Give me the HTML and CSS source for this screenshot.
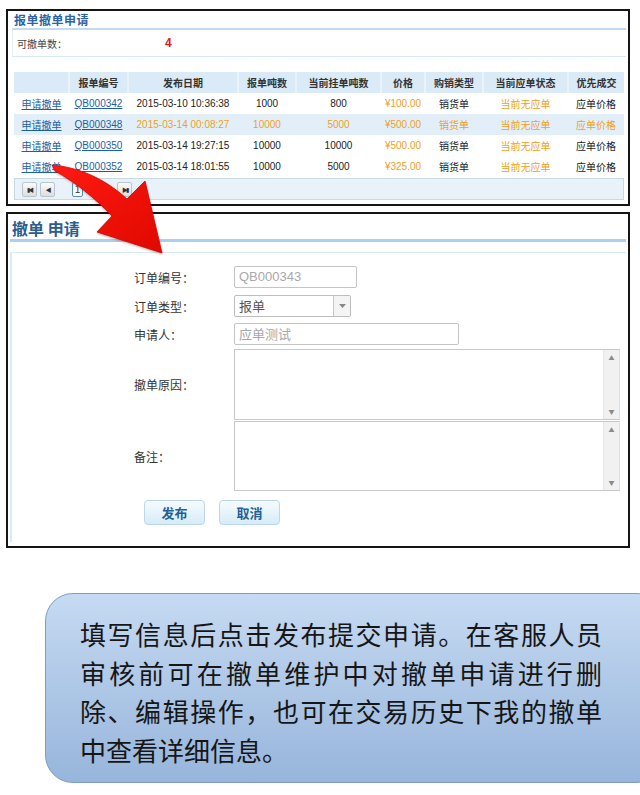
FILE: index.html
```html
<!DOCTYPE html>
<html lang="zh-CN">
<head>
<meta charset="utf-8">
<title>撤单申请</title>
<link rel="stylesheet" href="styles.css">
</head>
<body>
<div class="page">
  <section class="panel panel-list">
    <h1 class="list-title">报单撤单申请</h1>
    <div class="count-box">
      <span class="count-label">可撤单数：</span>
      <span class="count-num">4</span>
    </div>
    <table class="grid">
      <colgroup>
        <col class="w55"><col class="w59"><col class="w110"><col class="w58"><col class="w85"><col class="w44"><col class="w58"><col class="w85"><col class="w56">
      </colgroup>
      <thead>
        <tr><th></th><th>报单编号</th><th>发布日期</th><th>报单吨数</th><th>当前挂单吨数</th><th>价格</th><th>购销类型</th><th>当前应单状态</th><th>优先成交</th></tr>
      </thead>
      <tbody>
        <tr><td><a>申请撤单</a></td><td><a>QB000342</a></td><td>2015-03-10 10:36:38</td><td>1000</td><td>800</td><td class="org">¥100.00</td><td>销货单</td><td class="org">当前无应单</td><td>应单价格</td></tr>
        <tr class="alt"><td><a>申请撤单</a></td><td><a>QB000348</a></td><td>2015-03-14 00:08:27</td><td>10000</td><td>5000</td><td>¥500.00</td><td>销货单</td><td>当前无应单</td><td>应单价格</td></tr>
        <tr><td><a>申请撤单</a></td><td><a>QB000350</a></td><td>2015-03-14 19:27:15</td><td>10000</td><td>10000</td><td class="org">¥500.00</td><td>销货单</td><td class="org">当前无应单</td><td>应单价格</td></tr>
        <tr><td><a>申请撤单</a></td><td><a>QB000352</a></td><td>2015-03-14 18:01:55</td><td>10000</td><td>5000</td><td class="org">¥325.00</td><td>销货单</td><td class="org">当前无应单</td><td>应单价格</td></tr>
      </tbody>
    </table>
    <div class="pager">
      <span class="pbtn">&#9646;&#9664;</span>
      <span class="pbtn">&#9664;</span>
      <span class="pnum">1</span>
      <span class="pbtn pspace"></span>
      <span class="pbtn">&#9654;&#9646;</span>
    </div>
  </section>

  <section class="panel panel-form">
    <h2 class="form-title">撤单 申请</h2>
    <div class="form-body">
      <div class="row r1"><span class="lbl">订单编号：</span><span class="inp inp-code">QB000343</span></div>
      <div class="row r2"><span class="lbl">订单类型：</span><span class="inp sel"><span class="sel-val">报单</span><span class="sel-btn"><svg width="7" height="4" viewBox="0 0 7 4"><path d="M0 0h7L3.5 4z" fill="#888"/></svg></span></span></div>
      <div class="row r3"><span class="lbl">申请人：</span><span class="inp inp-name">应单测试</span></div>
      <div class="row r4"><span class="lbl">撤单原因：</span><span class="area"><span class="area-bar"><span class="up">&#9650;</span><span class="dn">&#9660;</span></span></span></div>
      <div class="row r5"><span class="lbl">备注：</span><span class="area area2"><span class="area-bar"><span class="up">&#9650;</span><span class="dn">&#9660;</span></span></span></div>
      <div class="btns"><span class="btn">发布</span><span class="btn">取消</span></div>
    </div>
  </section>

  <div class="note">
    <span class="nl j">填写信息后点击发布提交申请。在客服人员</span>
    <span class="nl j">审核前可在撤单维护中对撤单申请进行删</span>
    <span class="nl j">除、编辑操作，也可在交易历史下我的撤单</span>
    <span class="nl">中查看详细信息。</span>
  </div>

  <svg class="arrow" width="640" height="300" viewBox="0 0 640 300">
    <defs>
      <linearGradient id="rg" x1="0" y1="0" x2="1" y2="1">
        <stop offset="0" stop-color="#ff1a10"/>
        <stop offset="1" stop-color="#e00800"/>
      </linearGradient>
    </defs>
    <path d="M52 165 C75 167 102 176 127 199 L145 181 L162 253 L97 232 L112 216 C95 198 75 182 55 171 Z" fill="url(#rg)" stroke="#c40a06" stroke-width="0.8"/>
  </svg>
</div>
</body>
</html>
```

FILE: styles.css
```css
* { box-sizing: border-box; }
html, body { margin: 0; padding: 0; background: #fff; }
body { font-family: "Liberation Sans", "Noto Sans CJK SC", sans-serif; color: #222; }
.page { position: relative; width: 640px; height: 795px; overflow: hidden; padding-top: 9px; }

.panel { border: 2px solid #151515; margin-left: 6px; width: 624px; background: #fff; }

/* list panel */
.panel-list { height: 197px; padding: 0 2px 0 4px; }
.list-title { margin: 0; height: 17px; padding-left: 2px; font: bold 12px/17px "Noto Sans CJK SC", sans-serif; color: #2e63a3; letter-spacing: 0.5px; }
.count-box { display: flex; align-items: center; height: 29px; margin-left: 0; border-top: 2px solid #c2dbf2; border-bottom: 1px solid #d6e8f3; border-left: 1px solid #e4eff7; font-family: "Noto Sans CJK SC", sans-serif; font-size: 10px; color: #444; }
.count-label { padding-left: 4px; width: 152px; }
.count-num { color: #e02020; font: bold 12px "Liberation Sans", sans-serif; }

.grid { margin-top: 15px; margin-left: 2px; width: 610px; border-collapse: collapse; table-layout: fixed; font-size: 10px; }
.w55 { width: 55px; } .w59 { width: 59px; } .w110 { width: 110px; } .w58 { width: 58px; } .w85 { width: 85px; } .w44 { width: 44px; } .w56 { width: 56px; }
.grid th { height: 21px; background: #daeaf7; border-right: 2px solid #e9f3fa; font: bold 10px "Noto Sans CJK SC", sans-serif; color: #333; text-align: center; padding: 0; }
.grid th:last-child { border-right: none; }
.grid td { height: 21px; padding: 0; text-align: center; white-space: nowrap; color: #222; font-family: "Liberation Sans", "Noto Sans CJK SC", sans-serif; }
.grid td a { color: #1d5ea8; text-decoration: underline; }
.grid tr.alt td { background: #e2eff9; color: #f0a020; }
.grid tr.alt td a { color: #1d5ea8; }
.grid td.org { color: #f0a020; }

.pager { margin-left: 2px; margin-top: 1px; width: 610px; height: 22px; background: #e9f2f9; border: 1px solid #c8dae8; display: flex; align-items: center; padding-left: 7px; gap: 3px; }
.pbtn { display: inline-flex; align-items: center; justify-content: center; width: 15px; height: 15px; border: 1px solid #b8c6d0; border-radius: 2px; background: linear-gradient(#fbfbfb, #dedede); font-size: 6px; color: #333; letter-spacing: -2px; }
.pnum { display: inline-flex; align-items: center; justify-content: center; width: 11px; height: 15px; margin-left: 14px; border: 1px solid #5a8fc4; border-radius: 2px; background: #fff; font-size: 10px; color: #333; }
.pspace { margin-left: 13px; visibility: hidden; }

/* form panel */
.panel-form { margin-top: 6px; height: 336px; padding: 0 2px 0 2px; }
.form-title { margin: 0; height: 28px; padding-left: 2px; font: bold 16px/28px "Noto Sans CJK SC", sans-serif; color: #2b5d8f; border-bottom: 3px solid #a9d1ee; }
.form-body { margin-top: 10px; height: 290px; border-top: 1px solid #d8ecf5; border-left: 2px solid #d9edf5; padding-left: 122px; padding-top: 13px; font-family: "Noto Sans CJK SC", sans-serif; }
.row { display: flex; align-items: center; }
.lbl { width: 100px; font-size: 12px; color: #333; }
.inp { height: 22px; border: 1px solid #c4c4c4; border-radius: 2px; padding-left: 4px; font-size: 13px; line-height: 20px; color: #a8a8a8; background: #fff; }
.inp-code { width: 123px; font-family: "Liberation Sans", sans-serif; }
.inp-name { width: 225px; }
.r2 { margin-top: 7px; }
.r3 { margin-top: 6px; }
.sel { width: 117px; display: flex; padding-left: 4px; padding-right: 0; color: #555; border-color: #bdbdbd; }
.sel-val { flex: 1; }
.sel-btn { width: 17px; height: 20px; border-left: 1px solid #c9c9c9; display: flex; align-items: center; justify-content: center; background: #f4f4f4; }
.r4 { margin-top: 4px; }
.r5 { margin-top: 1px; }
.area { display: flex; justify-content: flex-end; width: 386px; height: 71px; border: 1px solid #c8c8c8; border-right-color: #e0e0e0; background: #fff; }
.area2 { height: 70px; }
.area-bar { width: 16px; height: 100%; background: #f1f1f1; border-left: 1px solid #e6e6e6; display: flex; flex-direction: column; justify-content: space-between; align-items: center; padding: 3px 0; font-size: 6px; color: #8a8a8a; }
.btns { display: flex; gap: 14px; margin-top: 9px; margin-left: 10px; }
.btn { display: inline-flex; align-items: center; justify-content: center; width: 61px; height: 25px; border: 1px solid #bcd7ea; border-radius: 4px; background: linear-gradient(#f6fbfe, #d6ecf8); font: bold 13px "Noto Sans CJK SC", sans-serif; color: #215f98; }

/* note bubble */
.note { position: relative; margin-top: 45px; margin-left: 45px; width: 620px; height: 190px; border: 1.5px solid #7c9bc8; border-radius: 28px; background: linear-gradient(#c6daf2, #97b5db); padding: 21px 0 0 34px; font-family: "Noto Sans CJK SC", sans-serif; font-size: 26px; line-height: 38.5px; color: #161616; }
.nl { display: block; width: 522px; }
.nl.j { text-align: justify; text-align-last: justify; }

.arrow { position: absolute; left: 0; top: 0; pointer-events: none; filter: drop-shadow(0 1px 1px rgba(120,0,0,0.35)); }
```
